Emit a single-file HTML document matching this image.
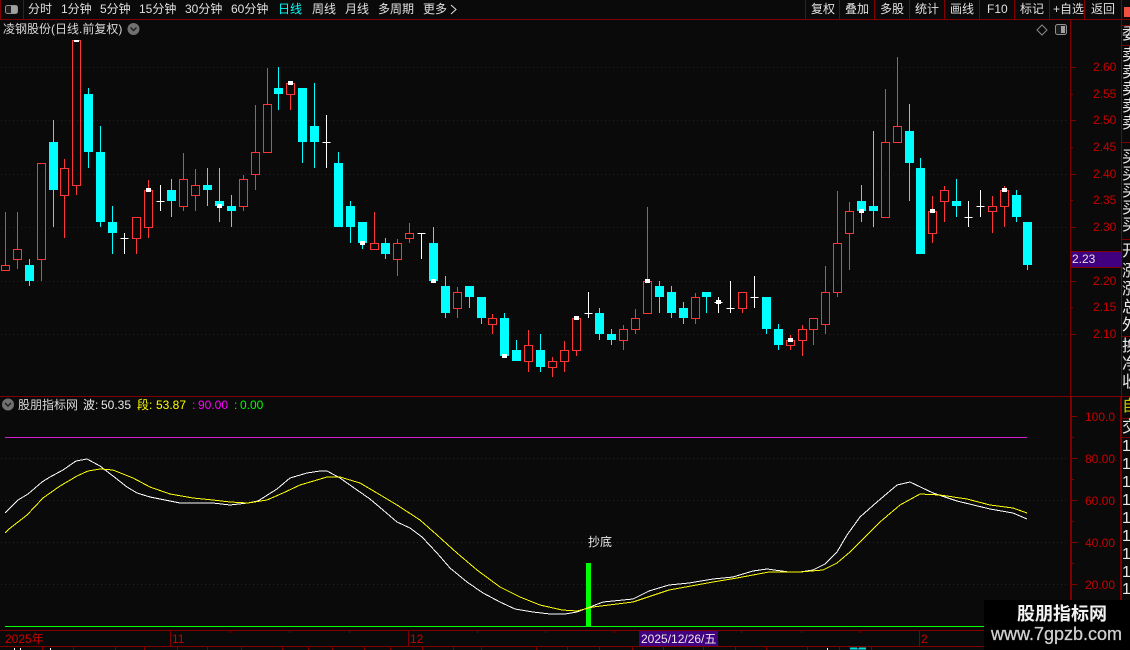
<!DOCTYPE html>
<html lang="zh">
<head>
<meta charset="utf-8">
<title>股朋指标网</title>
<style>
html,body{margin:0;padding:0;background:#0a0a0a}
#p{position:relative;width:1130px;height:650px;overflow:hidden;background:#0a0a0a;font:12px/14px "Liberation Sans","WenQuanYi Zen Hei","Noto Sans CJK SC",sans-serif;color:#e0e0e0}
#p svg{position:absolute;left:0;top:0}
.t{position:absolute;white-space:nowrap}
.a{position:absolute;white-space:nowrap;color:#c80000}
#sb{position:absolute;left:1122px;top:0;width:8px;height:600px;overflow:hidden}
#sb span{position:absolute;left:0;white-space:nowrap;font-size:16px;line-height:16px;color:#e8e8e8}
#wm{position:absolute;left:984px;top:600px;width:146px;height:50px;background:#000}
</style>
</head>
<body>
<div id="p">
<svg width="1130" height="650" viewBox="0 0 1130 650">
<g shape-rendering="crispEdges" fill="none">
<path stroke="#5a0808" stroke-dasharray="1 3" d="M1 67.5H1066M1 120.5H1066M1 174.5H1066M1 227.5H1066M1 281.5H1066M1 334.5H1066"/>
<path stroke="#6e0404" stroke-dasharray="1 3" d="M1 458.5H1066M1 500.5H1066M1 542.5H1066M1 584.5H1066"/>
<path stroke="#800000" d="M0 19.5H1130M0.5 0V19M23.5 0V19M805.5 0V19M839.5 0V19M874.5 0V19M909.5 0V19M944.5 0V19M979.5 0V19M1014.5 0V19M1049.5 0V19M1084.5 0V19M1121.5 0V650M1070.5 20V396M0 396.5H1122M0 630.5H1122M0 646.5H1130M1120.5 397V646M1122 25.5H1130M1122 45.5H1130M1122 142.5H1130M1122 239.5H1130M1122 336.5H1130M1122 396.5H1130M1122 418.5H1130M1122 437.5H1130"/>
<path stroke="#800000" stroke-width="2" d="M1071 397V646"/>
<path stroke="#800000" d="M1071 67.5h5M1071 94.5h2M1071 120.5h5M1071 147.5h2M1071 174.5h5M1071 200.5h2M1071 227.5h5M1071 281.5h5M1071 307.5h2M1071 334.5h5M1072 416.5h5M1072 437.5h2M1072 458.5h5M1072 479.5h2M1072 500.5h5M1072 521.5h2M1072 542.5h5M1072 563.5h2M1072 584.5h5M1072 605.5h2"/>
<path stroke="#800000" d="M170.5 630V646M408.5 630V646M919.5 630V646M230.5 631v2M289.5 631v2M349.5 631v2M477.5 631v2M545.5 631v2M614.5 631v2M681.5 631v2M741.5 631v2M801.5 631v2M860.5 631v2"/>
<path stroke="#800000" d="M42.5 647V650M73.5 647V650M115.5 647V650M144.5 647V650M177.5 647V650M207.5 647V650M241.5 647V650M282.5 647V650M308.5 647V650M332.5 647V650M364.5 647V650M390.5 647V650M422.5 647V650M453.5 647V650M481.5 647V650M536.5 647V650M567.5 647V650M599.5 647V650M632.5 647V650M663.5 647V650M703.5 647V650M735.5 647V650M766.5 647V650M807.5 647V650M839.5 647V650M871.5 647V650"/>
<path stroke="#ff3636" d="M5.5 212V265M1.5 265.5h8v5h-8zM17.5 212V249M13.5 249.5h8v10h-8zM17.5 260V269M37.5 163.5h8v96h-8zM41.5 260V281M64.5 159V168M60.5 168.5h8v27h-8zM64.5 196V238M72.5 40.5h8v145h-8zM76.5 186V195M132.5 217.5h8v21h-8zM136.5 239V254M148.5 180V190M144.5 190.5h8v37h-8zM148.5 228V238M183.5 153V179M179.5 179.5h8v27h-8zM183.5 207V211M195.5 169V185M191.5 185.5h8v10h-8zM195.5 196V211M243.5 175V179M239.5 179.5h8v27h-8zM243.5 207V211M255.5 105V152M251.5 152.5h8v22h-8zM255.5 175V190M267.5 68V104M263.5 104.5h8v48h-8zM286.5 83.5h8v11h-8zM290.5 95V110M374.5 212V243M370.5 243.5h8v6h-8zM397.5 239V243M393.5 243.5h8v16h-8zM397.5 260V276M409.5 223V233M405.5 233.5h8v5h-8zM409.5 239V243M457.5 287V292M453.5 292.5h8v16h-8zM457.5 309V318M492.5 314V318M488.5 318.5h8v6h-8zM492.5 325V334M528.5 330V345M524.5 345.5h8v16h-8zM528.5 362V372M552.5 357V361M548.5 361.5h8v6h-8zM552.5 368V377M564.5 341V350M560.5 350.5h8v11h-8zM564.5 362V372M572.5 318.5h8v32h-8zM576.5 351V356M623.5 325V329M619.5 329.5h8v11h-8zM623.5 341V350M635.5 309V318M631.5 318.5h8v11h-8zM635.5 330V334M647.5 207V281M643.5 281.5h8v32h-8zM695.5 293V297M691.5 297.5h8v21h-8zM695.5 319V324M738.5 292.5h8v16h-8zM742.5 309V313M790.5 335V340M786.5 340.5h8v5h-8zM790.5 346V350M802.5 325V329M798.5 329.5h8v11h-8zM802.5 341V356M809.5 318.5h8v11h-8zM813.5 330V345M825.5 266V292M821.5 292.5h8v32h-8zM825.5 325V334M837.5 191V243M833.5 243.5h8v49h-8zM837.5 293V297M849.5 202V211M845.5 211.5h8v22h-8zM849.5 234V270M885.5 89V142M881.5 142.5h8v75h-8zM897.5 57V126M893.5 126.5h8v16h-8zM932.5 196V211M928.5 211.5h8v22h-8zM932.5 234V243M944.5 186V190M940.5 190.5h8v11h-8zM944.5 202V222M992.5 196V206M988.5 206.5h8v5h-8zM992.5 212V233M1004.5 186V190M1000.5 190.5h8v16h-8zM1004.5 207V227"/>
<path stroke="#00ffff" d="M29.5 259V286M53.5 120V227M88.5 88V168M100.5 126V227M112.5 206V254M171.5 179V217M207.5 168V206M219.5 168V222M231.5 195V227M278.5 67V110M302.5 142V163M314.5 83V168M338.5 152V163M350.5 201V243M362.5 243V249M385.5 238V259M433.5 227V243M445.5 276V318M469.5 297V308M481.5 318V324M504.5 313V318M516.5 340V350M540.5 334V372M599.5 308V340M611.5 329V345M659.5 281V313M671.5 286V318M683.5 302V324M706.5 297V313M766.5 329V334M778.5 324V350M861.5 185V222M873.5 131V227M909.5 104V201M920.5 158V168M956.5 179V217M1016.5 190V222M1027.5 265V270"/>
<path fill="#00ffff" d="M25 265h9v16h-9zM49 142h9v48h-9zM84 94h9v58h-9zM96 152h9v70h-9zM108 222h9v11h-9zM167 190h9v11h-9zM203 185h9v5h-9zM215 201h9v5h-9zM227 206h9v5h-9zM274 88h9v6h-9zM298 88h9v54h-9zM310 126h9v16h-9zM334 163h9v64h-9zM346 206h9v21h-9zM358 222h9v21h-9zM381 243h9v11h-9zM429 243h9v38h-9zM441 286h9v27h-9zM465 286h9v11h-9zM477 297h9v21h-9zM500 318h9v38h-9zM512 350h9v11h-9zM536 350h9v17h-9zM595 313h9v21h-9zM607 334h9v6h-9zM655 286h9v11h-9zM667 292h9v21h-9zM679 308h9v10h-9zM702 292h9v5h-9zM762 297h9v32h-9zM774 329h9v16h-9zM857 201h9v10h-9zM869 206h9v5h-9zM905 131h9v32h-9zM916 168h9v86h-9zM952 201h9v5h-9zM1012 195h9v22h-9zM1023 222h9v43h-9z" stroke="none"/>
<path stroke="#ffffff" d="M124.5 233V254M120.5 238.5h8M160.5 185V211M156.5 201.5h8M326.5 115V168M322.5 142.5h8M421.5 233V259M417.5 233.5h8M588.5 292V318M584.5 313.5h8M718.5 297V313M714.5 302.5h8M730.5 281V313M726.5 308.5h8M754.5 276V308M750.5 297.5h8M968.5 201V227M964.5 217.5h8M980.5 190V217M976.5 206.5h8"/>
<path fill="#ffffff" stroke="none" d="M74 40h5v2h-5zM146 188h5v4h-5zM217 204h5v4h-5zM288 81h5v4h-5zM360 241h5v4h-5zM431 279h5v4h-5zM502 354h5v4h-5zM574 316h5v4h-5zM645 279h5v4h-5zM716 300h5v4h-5zM788 338h5v4h-5zM859 209h5v4h-5zM930 209h5v4h-5zM1002 188h5v4h-5z"/>
<path stroke="#d31ed3" d="M5 437.5H1027"/>
<path stroke="#00ff00" d="M5 626.5H1130"/>
<rect x="586" y="563" width="5" height="63" fill="#00ff00" stroke="none"/>
<rect x="1071" y="252" width="50" height="15" fill="#400080" stroke="none"/>
<path stroke="#800000" d="M1071 251.5H1121M1071 267.5H1121"/>
<rect x="639" y="631" width="79" height="15" fill="#400080" stroke="none"/>
<path fill="#f05040" stroke="none" d="M1124 7h6v10h-6z"/>
<path stroke="#fff" d="M14.5 648V650M20.5 648V650M50.5 648V650M827.5 648V650"/>
<path stroke="#00e0e0" d="M850 648h7M859 648h7M850 649h16"/>
<polyline stroke="#ffffff" points="5,513 18,500 28,494 42,482 50,477 63,470 76,461 87,459 100,466 113,476 127,487 137,493 150,497 170,501 180,503 213,503 230,505 248,503 258,501 277,489 290,478 307,473 320,471 327,471 340,478 357,490 370,499 383,510 397,522 410,528 422,537 437,553 450,568 467,582 483,593 500,602 515,609 533,612 550,614 565,614 577,612 590,607 603,602 633,599 649,591 669,585 689,583 713,579 733,577 753,571 767,569 789,572 800,572 813,570 825,564 837,552 847,535 860,517 877,502 897,485 910,482 933,493 957,501 990,509 1013,513 1027,519"/>
<polyline stroke="#ffff00" points="5,533 9,529 27,515 43,498 60,486 77,476 88,471 100,469 113,470 133,478 150,487 170,494 193,498 213,500 230,502 248,503 267,500 283,493 300,485 317,480 327,477 340,477 360,483 377,493 397,505 420,520 437,535 457,553 477,570 500,587 520,597 540,605 562,610 577,611 593,607 633,602 669,590 713,582 737,578 769,572 800,572 823,570 837,563 850,552 880,522 900,505 920,494 940,495 967,499 990,505 1013,508 1027,513"/>
</g>
<rect x="5.5" y="5.5" width="12" height="8" rx="2" fill="#1c1c1c" stroke="#909090"/>
<rect x="11" y="6" width="6" height="7" fill="#a0a0a0"/>
<circle cx="133.5" cy="29" r="6" fill="#707070"/>
<path d="M130.5 27.5l3 3 3-3" fill="none" stroke="#1c1c1c" stroke-width="1.4"/>
<circle cx="8" cy="404.500" r="6" fill="#707070"/>
<path d="M5 403l3 3 3-3" fill="none" stroke="#1c1c1c" stroke-width="1.4"/>
<path d="M1042 25l5 5-5 5-5-5z" fill="none" stroke="#8a8a8a"/>
<rect x="1055.500" y="24.500" width="11" height="10" rx="2" fill="#1c1c1c" stroke="#909090"/>
<rect x="1061" y="26" width="4" height="7" fill="#a0a0a0"/>
<path d="M451 5l5 4.500-5 4.500" fill="none" stroke="#e0e0e0"/>
</svg>

<span class="t" style="left:28px;top:2px">分时</span>
<span class="t" style="left:61px;top:2px">1分钟</span>
<span class="t" style="left:100px;top:2px">5分钟</span>
<span class="t" style="left:139px;top:2px">15分钟</span>
<span class="t" style="left:185px;top:2px">30分钟</span>
<span class="t" style="left:231px;top:2px">60分钟</span>
<span class="t" style="left:278px;top:2px;color:#00ffff">日线</span>
<span class="t" style="left:312px;top:2px">周线</span>
<span class="t" style="left:345px;top:2px">月线</span>
<span class="t" style="left:378px;top:2px">多周期</span>
<span class="t" style="left:423px;top:2px">更多</span>

<span class="t" style="left:811px;top:2px">复权</span>
<span class="t" style="left:845px;top:2px">叠加</span>
<span class="t" style="left:880px;top:2px">多股</span>
<span class="t" style="left:915px;top:2px">统计</span>
<span class="t" style="left:950px;top:2px">画线</span>
<span class="t" style="left:987px;top:2px">F10</span>
<span class="t" style="left:1020px;top:2px">标记</span>
<span class="t" style="left:1053px;top:2px">+自选</span>
<span class="t" style="left:1091px;top:2px">返回</span>

<span class="t" style="left:3px;top:22px;color:#d8d8d8">凌钢股份(日线.前复权)</span>

<span class="a" style="left:1093px;top:60px">2.60</span>
<span class="a" style="left:1093px;top:87px">2.55</span>
<span class="a" style="left:1093px;top:113px">2.50</span>
<span class="a" style="left:1093px;top:140px">2.45</span>
<span class="a" style="left:1093px;top:167px">2.40</span>
<span class="a" style="left:1093px;top:193px">2.35</span>
<span class="a" style="left:1093px;top:220px">2.30</span>
<span class="t" style="left:1072px;top:252px;color:#e0e0e0">2.23</span>
<span class="a" style="left:1093px;top:274px">2.20</span>
<span class="a" style="left:1093px;top:300px">2.15</span>
<span class="a" style="left:1093px;top:327px">2.10</span>

<span class="t" style="left:18px;top:398px;color:#d8d8d8">股朋指标网</span>
<span class="t" style="left:83px;top:398px;color:#e8e8e8">波:</span>
<span class="t" style="left:101px;top:398px;color:#e8e8e8">50.35</span>
<span class="t" style="left:137px;top:398px;color:#ffff00">段:</span>
<span class="t" style="left:156px;top:398px;color:#ffff00">53.87</span>
<span class="t" style="left:192px;top:398px;color:#ff00ff">:</span>
<span class="t" style="left:198px;top:398px;color:#ff00ff">90.00</span>
<span class="t" style="left:234px;top:398px;color:#00ff00">:</span>
<span class="t" style="left:240px;top:398px;color:#00ff00">0.00</span>

<span class="a" style="left:1085px;top:410px">100.0</span>
<span class="a" style="left:1085px;top:452px">80.00</span>
<span class="a" style="left:1085px;top:494px">60.00</span>
<span class="a" style="left:1085px;top:536px">40.00</span>
<span class="a" style="left:1085px;top:578px">20.00</span>

<span class="t" style="left:588px;top:535px;color:#e8e8e8">抄底</span>

<span class="a" style="left:5px;top:632px">2025年</span>
<span class="a" style="left:172px;top:632px">11</span>
<span class="a" style="left:410px;top:632px">12</span>
<span class="a" style="left:921px;top:632px">2</span>
<span class="t" style="left:641px;top:632px;color:#e8e8e8">2025/12/26/五</span>

<div id="sb">
<span style="top:27px">委</span>
<span style="top:48px">卖</span><span style="top:65px">卖</span><span style="top:82px">卖</span><span style="top:99px">卖</span><span style="top:116px">卖</span>
<span style="top:150px">买</span><span style="top:167px">买</span><span style="top:184px">买</span><span style="top:201px">买</span><span style="top:218px">买</span>
<span style="top:244px">开</span><span style="top:264px">涨</span><span style="top:282px">涨</span><span style="top:300px">总</span><span style="top:318px">外</span>
<span style="top:339px">换</span><span style="top:357px">净</span><span style="top:375px">收</span>
<span style="top:399px;color:#c8c800">自</span>
<span style="top:420px">交</span>
<span style="top:439px">1</span><span style="top:457px">1</span><span style="top:475px">1</span><span style="top:493px">1</span><span style="top:511px">1</span><span style="top:529px">1</span><span style="top:547px">1</span><span style="top:565px">1</span><span style="top:582px">1</span>
</div>

<div id="wm"></div>
<span class="t" style="left:1017px;top:604px;font-size:18px;line-height:20px;font-weight:bold;color:#f2f2f2">股朋指标网</span>
<span class="t" style="left:991px;top:624px;font-size:18px;line-height:20px;color:#cfcfcf;-webkit-text-stroke:.3px #cfcfcf">www.7gpzb.com</span>
</div>
</body>
</html>
